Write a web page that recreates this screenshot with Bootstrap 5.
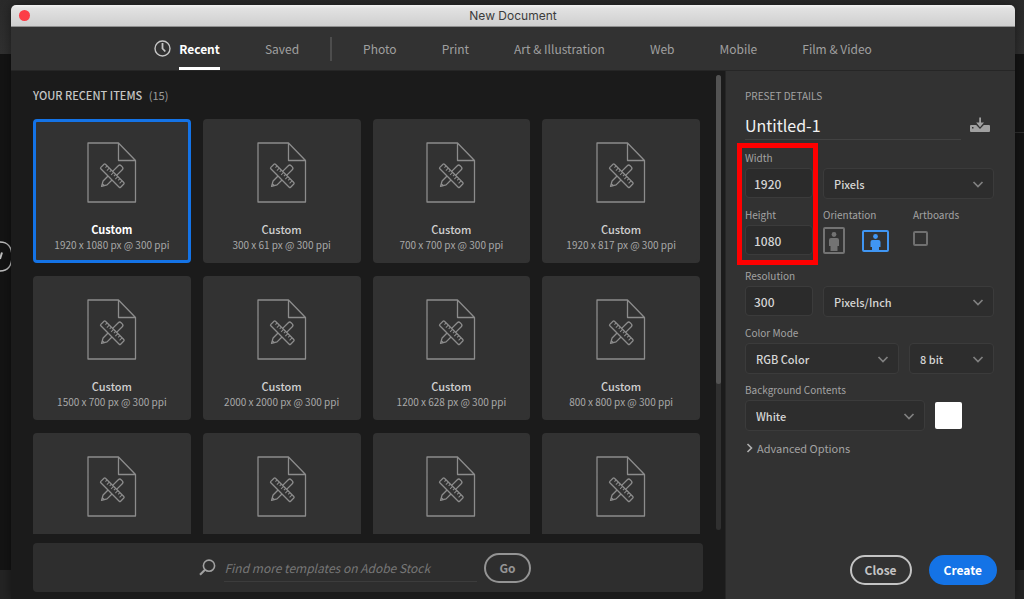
<!DOCTYPE html>
<html lang="en">
<head>
<meta charset="utf-8">
<meta name="viewport" content="width=device-width, initial-scale=1">
<title>New Document</title>
<link href="https://cdn.jsdelivr.net/npm/bootstrap@5.3.0/dist/css/bootstrap.min.css" rel="stylesheet">
<style>
  body {
    font-family: "Noto Sans CJK SC", "Noto Sans", sans-serif;
    font-size: 11px;
    line-height: 16px;
    color: #a3a3a3;
    background: linear-gradient(#2a2a2a, #303030 54px, #141414 54px, #141414 570px, #242424 570px);
  }
  .desk { height: 100vh; min-height: 520px; padding: 5px 9px 0 11px; }
  .desk-logo { left: 0; top: 241px; }
  .desk-rule { right: 0; top: 132px; width: 9px; height: 1px; background: #303030; }
  .dialog-window { background: #1b1b1b; border-radius: 5px 5px 0 0; box-shadow: 0 0 12px rgba(0,0,0,.45); }
  .title-bar {
    height: 22px; border-bottom: 1px solid #8f8f8f;
    background: linear-gradient(#f2f2f2, #e2e2e2 3px, #cfcfcf);
    font-family: Inter, sans-serif; font-size: 12px; color: #3c3c3c;
  }
  .close-dot { left: 8px; top: 5px; width: 11px; height: 11px; border-radius: 50%; background: #fc3d46; }
  .tab-bar { height: 44px; background: #323232; border-bottom: 1px solid #262626; gap: 45px; font-size: 12px; }
  .tab-bar a { color: #a0a0a0; text-decoration: none; line-height: 43px; height: 43px; white-space: nowrap; }
  .tab-bar a.active { color: #fff; font-weight: 700; border-bottom: 3px solid #fff; }
  .tab-rule { width: 2px; height: 24px; margin: 0 -14px; background: #4d4d4d; }
  .items-pane { padding: 0 22px 7px 22px; }
  .items-head { padding: 16px 0; color: #c6c6c6; font-weight: 500; }
  .items-head span { color: #9b9b9b; font-weight: 400; margin-left: 4px; }
  .preset-grid { display: grid; grid-template-columns: repeat(4, 1fr); grid-auto-rows: 144px; gap: 13px 12px; margin-right: 3px; }
  .preset {
    background: #323232; border: 3px solid #323232; border-radius: 4px; padding: 20px 0 0;
    font-size: 10px; line-height: 15px; color: #a8a8a8; text-align: center;
  }
  .preset strong { display: block; font-size: 11px; font-weight: 500; color: #d0d0d0; margin-top: 19px; }
  .preset.selected { border-color: #1473e6; }
  .preset.selected strong { color: #fff; font-weight: 700; }
  .scroll-track { right: 4px; top: 4px; bottom: 69px; width: 5px; border-radius: 3px; background: #303030; }
  .scroll-thumb { height: 68%; border-radius: 3px; background: #535353; }
  .stock-bar { height: 49px; margin-top: 9px; padding-right: 6px; background: #2e2e2e; border-radius: 4px; }
  .stock-input {
    width: 253px; height: 28px; border: 0; border-bottom: 1px solid #3c3c3c; background: none; outline: 0;
    padding: 0; margin: 0 7px 0 8px; font-size: 12px; color: #ccc;
  }
  .stock-input::placeholder { font-style: italic; color: #777; opacity: 1; }
  .pill { height: 30px; border: 2px solid #c4c4c4; border-radius: 15px; color: #c4c4c4; font-size: 12px; line-height: 16px; font-weight: 700; padding: 0 13px; }
  .pill-dim { border-color: #949494; color: #949494; }
  .pill-primary { background: #1473e6; border-color: #1473e6; color: #fff; }
  .details-pane { width: 290px; padding: 17px 21px 14px 19px; background: #323232; border-left: 1px solid #262626; font-size: 10px; }
  .details-pane label { display: block; margin-bottom: 2px; white-space: nowrap; }
  .name-input {
    width: 216px; height: 30px; padding: 0; border: 0; border-bottom: 1px solid #424242; background: none;
    outline: 0; color: #f2f2f2; font-size: 16px;
  }
  .name-row { padding-top: 6px; margin-bottom: 10px; }
  .field-row { display: flex; gap: 10px; margin-bottom: 8px; }
  .num-col { width: 68px; flex: none; }
  .num-col .form-control, .details-pane .form-select {
    height: 31px; background-color: #2b2b2b; border: 1px solid #3b3b3b; border-radius: 4px;
    color: #d6d6d6; font-size: 12px; font-weight: 500; line-height: 16px; padding: 0 8px;
  }
  .num-col .form-control { height: 30px; margin-bottom: 1px; }
  .details-pane .form-select {
    --bs-form-select-bg-img: url("data:image/svg+xml,%3csvg xmlns='http://www.w3.org/2000/svg' viewBox='0 0 12 12'%3e%3cpath d='M1.5 4 6 8.5 10.5 4' fill='none' stroke='%23808080' stroke-width='1.7'/%3e%3c/svg%3e");
    background-color: #2d2d2d; background-size: 12px 12px; background-position: right 9px center; padding: 0 24px 0 10px; font-size: 11px;
  }
  .size-fields { position: relative; }
  .highlight { left: -8px; top: -7px; width: 81px; height: 122px; border: 5px solid #f00; pointer-events: none; }
  .details-pane .orient { margin: 0; color: #737373; line-height: 0; }
  .btn-check:checked + .orient { color: #4096f3; }
  .orient-set { height: 27px; gap: 17px; }
  .art-check { appearance: none; display: block; width: 15px; height: 15px; margin: 8px 0 0; border: 2px solid #707070; border-radius: 2px; background: none; }
  .swatch { width: 27px; height: 27px; padding: 0; border: 0; border-radius: 2px; background: #fff; }
  .plain-btn { border: 0; background: none; padding: 0; color: inherit; }
  .more-btn { font-size: 11px; margin-top: 1px; }
  .action-row { gap: 17px; margin-right: -3px; }
</style>
</head>
<body class="overflow-hidden">
<div class="desk position-relative">
  <svg class="desk-logo position-absolute" width="13" height="31" viewBox="0 0 13 31" fill="none" stroke="#c0c0c0" aria-hidden="true"><path d="M0 1c8 0 12 6 12 14.500S8 30 0 30" stroke-width="1.600"/><path d="M2 11.500 0 18" stroke-width="2"/></svg>
  <span class="desk-rule position-absolute"></span>

  <main class="dialog-window position-relative h-100 d-flex flex-column overflow-hidden">
    <header class="title-bar position-relative flex-shrink-0 d-flex align-items-center justify-content-center">
      <button class="close-dot position-absolute border-0 p-0" type="button" aria-label="Close window"></button>
      New Document
    </header>

    <nav class="tab-bar flex-shrink-0 d-flex align-items-center justify-content-center">
      <span class="d-flex align-items-center">
        <svg class="me-2" width="17" height="17" viewBox="0 0 17 17" fill="none" stroke="#c4c4c4" aria-hidden="true"><circle cx="8.5" cy="8.5" r="7.5" stroke-width="1.4"/><path d="M8.5 3v5.5l2.8 3" stroke-width="1.8"/></svg>
        <a class="active" href="#">Recent</a>
      </span>
      <a href="#">Saved</a>
      <span class="tab-rule"></span>
      <a href="#">Photo</a>
      <a href="#">Print</a>
      <a href="#">Art &amp; Illustration</a>
      <a href="#">Web</a>
      <a href="#">Mobile</a>
      <a href="#">Film &amp; Video</a>
    </nav>

    <div class="d-flex flex-grow-1" style="min-height:0">
      <section class="items-pane position-relative flex-grow-1 d-flex flex-column">
        <div class="items-head">YOUR RECENT ITEMS <span>(15)</span></div>
        <div class="flex-grow-1 overflow-hidden" style="min-height:0">
          <div class="preset-grid" id="presets"></div>
        </div>
        <div class="scroll-track position-absolute"><div class="scroll-thumb"></div></div>
        <form class="stock-bar flex-shrink-0 d-flex align-items-center justify-content-center">
          <svg width="17" height="17" viewBox="0 0 17 17" fill="none" stroke="#a0a0a0" aria-hidden="true"><circle cx="10" cy="6.7" r="5.6" stroke-width="1.6"/><path d="M6 10.8 1 15.8" stroke-width="2.2"/></svg>
          <input class="stock-input" type="text" placeholder="Find more templates on Adobe Stock" aria-label="Find more templates on Adobe Stock">
          <button class="btn pill pill-dim" type="button">Go</button>
        </form>
      </section>

      <aside class="details-pane flex-shrink-0 d-flex flex-column">
        <div>PRESET DETAILS</div>
        <div class="name-row d-flex justify-content-between align-items-center">
          <input class="name-input" type="text" value="Untitled-1" aria-label="Document name">
          <button class="plain-btn d-flex me-1" type="button" aria-label="Save preset">
            <svg width="20" height="16" viewBox="0 0 20 16"><path fill="#a0a0a0" fill-rule="evenodd" d="M1 8h5.2L10 12l3.8-4H19a1 1 0 0 1 1 1v5a1 1 0 0 1-1 1H1a1 1 0 0 1-1-1V9a1 1 0 0 1 1-1zm1 2v1.5h1.5V10z"/><path fill="#a0a0a0" d="M9.2.5h1.8v5h3L10 10.2 6.2 5.5h3z"/></svg>
          </button>
        </div>

        <div class="size-fields mb-1">
          <div class="field-row align-items-end">
            <div class="num-col">
              <label for="w">Width</label>
              <input class="form-control" id="w" type="text" value="1920">
            </div>
            <select class="form-select" aria-label="Units"><option>Pixels</option></select>
          </div>
          <div class="field-row">
            <div class="num-col">
              <label for="h">Height</label>
              <input class="form-control" id="h" type="text" value="1080">
            </div>
            <div class="flex-grow-1">
              <div id="orient-label" class="mb-1">Orientation</div>
              <div class="orient-set d-flex align-items-center" role="radiogroup" aria-labelledby="orient-label">
                <input class="btn-check" type="radio" name="orient" id="portrait">
                <label class="orient" for="portrait" aria-label="Portrait"><svg width="22" height="27" viewBox="0 0 22 27"><rect x="1" y="1" width="20" height="25" rx="1" fill="none" stroke="currentColor" stroke-width="2"/><circle cx="11" cy="7.500" r="2.400" fill="currentColor"/><path fill="currentColor" d="M8 11h6a2 2 0 0 1 2 2v6h-1.500v5h-7v-5H6v-6a2 2 0 0 1 2-2z"/></svg></label>
                <input class="btn-check" type="radio" name="orient" id="landscape" checked>
                <label class="orient" for="landscape" aria-label="Landscape"><svg width="27" height="22" viewBox="0 0 27 22"><rect x="1" y="1" width="25" height="20" rx="1" fill="none" stroke="currentColor" stroke-width="2"/><circle cx="13.500" cy="6.500" r="2.400" fill="currentColor"/><path fill="currentColor" d="M10.500 10h6a2 2 0 0 1 2 2v5H17v3h-7v-3H8.500v-5a2 2 0 0 1 2-2z"/></svg></label>
              </div>
            </div>
            <div style="width:81px">
              <label for="ab">Artboards</label>
              <input class="art-check" id="ab" type="checkbox">
            </div>
          </div>
          <div class="highlight position-absolute"></div>
        </div>

        <div class="field-row align-items-end">
          <div class="num-col">
            <label for="res">Resolution</label>
            <input class="form-control" id="res" type="text" value="300">
          </div>
          <select class="form-select" aria-label="Resolution units"><option>Pixels/Inch</option></select>
        </div>

        <label for="mode">Color Mode</label>
        <div class="field-row">
          <select class="form-select" id="mode"><option>RGB Color</option></select>
          <select class="form-select w-50" aria-label="Bit depth"><option>8 bit</option></select>
        </div>

        <label for="bg">Background Contents</label>
        <div class="field-row align-items-center pe-4">
          <select class="form-select" id="bg"><option>White</option></select>
          <button class="swatch flex-shrink-0 me-2" type="button" aria-label="Background color"></button>
        </div>

        <button class="plain-btn more-btn d-flex align-items-center gap-1" type="button">
          <svg width="8" height="10" viewBox="0 0 8 10" fill="none" stroke="#b0b0b0" stroke-width="1.600" aria-hidden="true"><path d="M2.500 1l4 4-4 4"/></svg>
          Advanced Options
        </button>

        <div class="action-row mt-auto d-flex justify-content-end">
          <button class="btn pill" type="button">Close</button>
          <button class="btn pill pill-primary" type="button">Create</button>
        </div>
      </aside>
    </div>
  </main>
</div>

<template id="preset-tpl">
  <button class="preset d-flex flex-column align-items-center" type="button">
    <svg class="flex-shrink-0" width="50" height="61" viewBox="0 0 50 61" fill="none" stroke="#8c8c8c" stroke-width="1.300" stroke-linejoin="round" aria-hidden="true">
      <path d="M1 1h30.500l17 17.500V60H1zM31.500 1v17.500h17"/>
      <g transform="rotate(45 25.500 33.500)"><rect x="11.500" y="30.500" width="28" height="6.500" rx="1"/><path d="M15 30.500v2.500M18 30.500v3.500M21 30.500v2.500M24 30.500v3.500M27 30.500v2.500M30 30.500v3.500M33 30.500v2.500M36 30.500v3.500" stroke-width="1"/><path d="M22.700 30.500V22.500a2 2 0 0 1 2-2h1.600a2 2 0 0 1 2 2v8M22.700 37v7l2.800 5 2.800-5v-7M24.300 46.500h2.400"/></g>
    </svg>
    <strong>Custom</strong>
    <span></span>
  </button>
</template>
<script src="https://cdn.jsdelivr.net/npm/bootstrap@5.3.0/dist/js/bootstrap.bundle.min.js"></script>
<script>
  const sizes = ["1920 x 1080", "300 x 61", "700 x 700", "1920 x 817",
                 "1500 x 700", "2000 x 2000", "1200 x 628", "800 x 800",
                 "", "", "", ""];
  const grid = document.getElementById("presets");
  const tpl = document.getElementById("preset-tpl");
  sizes.forEach((size, i) => {
    const card = tpl.content.firstElementChild.cloneNode(true);
    if (size) card.querySelector("span").textContent = size + " px @ 300 ppi";
    else card.querySelector("strong").remove();
    if (i === 0) card.classList.add("selected");
    grid.append(card);
  });
</script>
</body>
</html>
